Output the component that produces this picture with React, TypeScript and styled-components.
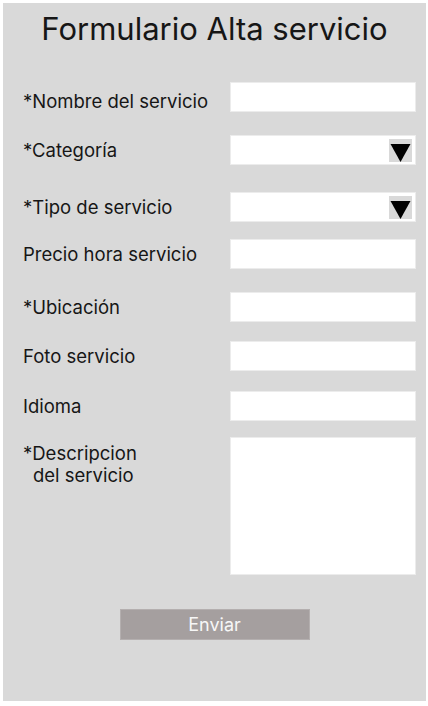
import React from "react";
import styled, { createGlobalStyle } from "styled-components";

const GlobalStyle = createGlobalStyle`
  html, body {
    margin: 0;
    padding: 0;
    background: #ffffff;
  }
  body {
    font-family: Inter, "Noto Sans", sans-serif;
    color: #161616;
  }
`;

const Page = styled.div`
  padding: 3px 2px 5px 3px;
`;

const Panel = styled.form`
  display: flex;
  flex-direction: column;
  height: 698px;
  box-sizing: border-box;
  padding: 0 10px 0 20px;
  background: #d9d9d9;
`;

const Title = styled.h1`
  margin: 8px 0 0 -10px;
  font-size: 31px;
  line-height: 36px;
  font-weight: 400;
  text-align: center;
`;

const Row = styled.div<{ $mt: number; $h?: number }>`
  display: grid;
  grid-template-columns: 1fr 186px;
  align-items: ${(p) => (p.$h ? "start" : "center")};
  margin-top: ${(p) => p.$mt}px;
  height: ${(p) => p.$h ?? 30}px;
`;

const Label = styled.label<{ $pt?: number }>`
  font-size: 18.5px;
  line-height: 22px;
  padding-top: ${(p) => p.$pt ?? 0}px;
`;

const Indent = styled.span`
  display: block;
  padding-left: 10px;
`;

const Box = styled.div`
  position: relative;
  height: 100%;
  box-sizing: border-box;
  background: #ffffff;
  border: 1px solid #ececec;
`;

const Arrow = styled.span`
  position: absolute;
  right: 3px;
  top: 3px;
  width: 23px;
  height: 23px;
  background: #d9d9d9;
  display: flex;
`;

const Button = styled.button`
  align-self: center;
  margin: 34px 0 0 -10px;
  width: 190px;
  height: 31px;
  border: 1px solid #b4afaf;
  background: #a59f9f;
  color: #f7f7f7;
  font-family: Inter, "Noto Sans", sans-serif;
  font-size: 18px;
  padding: 0;
`;

const Caret = () => (
  <svg width="23" height="23" viewBox="0 0 23 23">
    <polygon points="1.5,5 21.5,5 11.5,23" fill="#000" />
  </svg>
);

const fields: { label: React.ReactNode; mt: number; select?: boolean; h?: number; pt?: number }[] = [
  { label: "*Nombre del servicio", mt: 35, pt: 7 },
  { label: "*Categoría", mt: 23, select: true },
  { label: "*Tipo de servicio", mt: 27, select: true },
  { label: "Precio hora servicio", mt: 17 },
  { label: "*Ubicación", mt: 23 },
  { label: "Foto servicio", mt: 19 },
  { label: "Idioma", mt: 20 },
  {
    label: (
      <>
        *Descripcion
        <Indent>del servicio</Indent>
      </>
    ),
    mt: 16,
    h: 138,
    pt: 5,
  },
];

export default function App() {
  return (
    <Page>
      <GlobalStyle />
      <Panel onSubmit={(e) => e.preventDefault()}>
        <Title>Formulario Alta servicio</Title>
        {fields.map((f, i) => (
          <Row key={i} $mt={f.mt} $h={f.h}>
            <Label $pt={f.pt}>{f.label}</Label>
            <Box>
              {f.select && (
                <Arrow>
                  <Caret />
                </Arrow>
              )}
            </Box>
          </Row>
        ))}
        <Button type="submit">Enviar</Button>
      </Panel>
    </Page>
  );
}
